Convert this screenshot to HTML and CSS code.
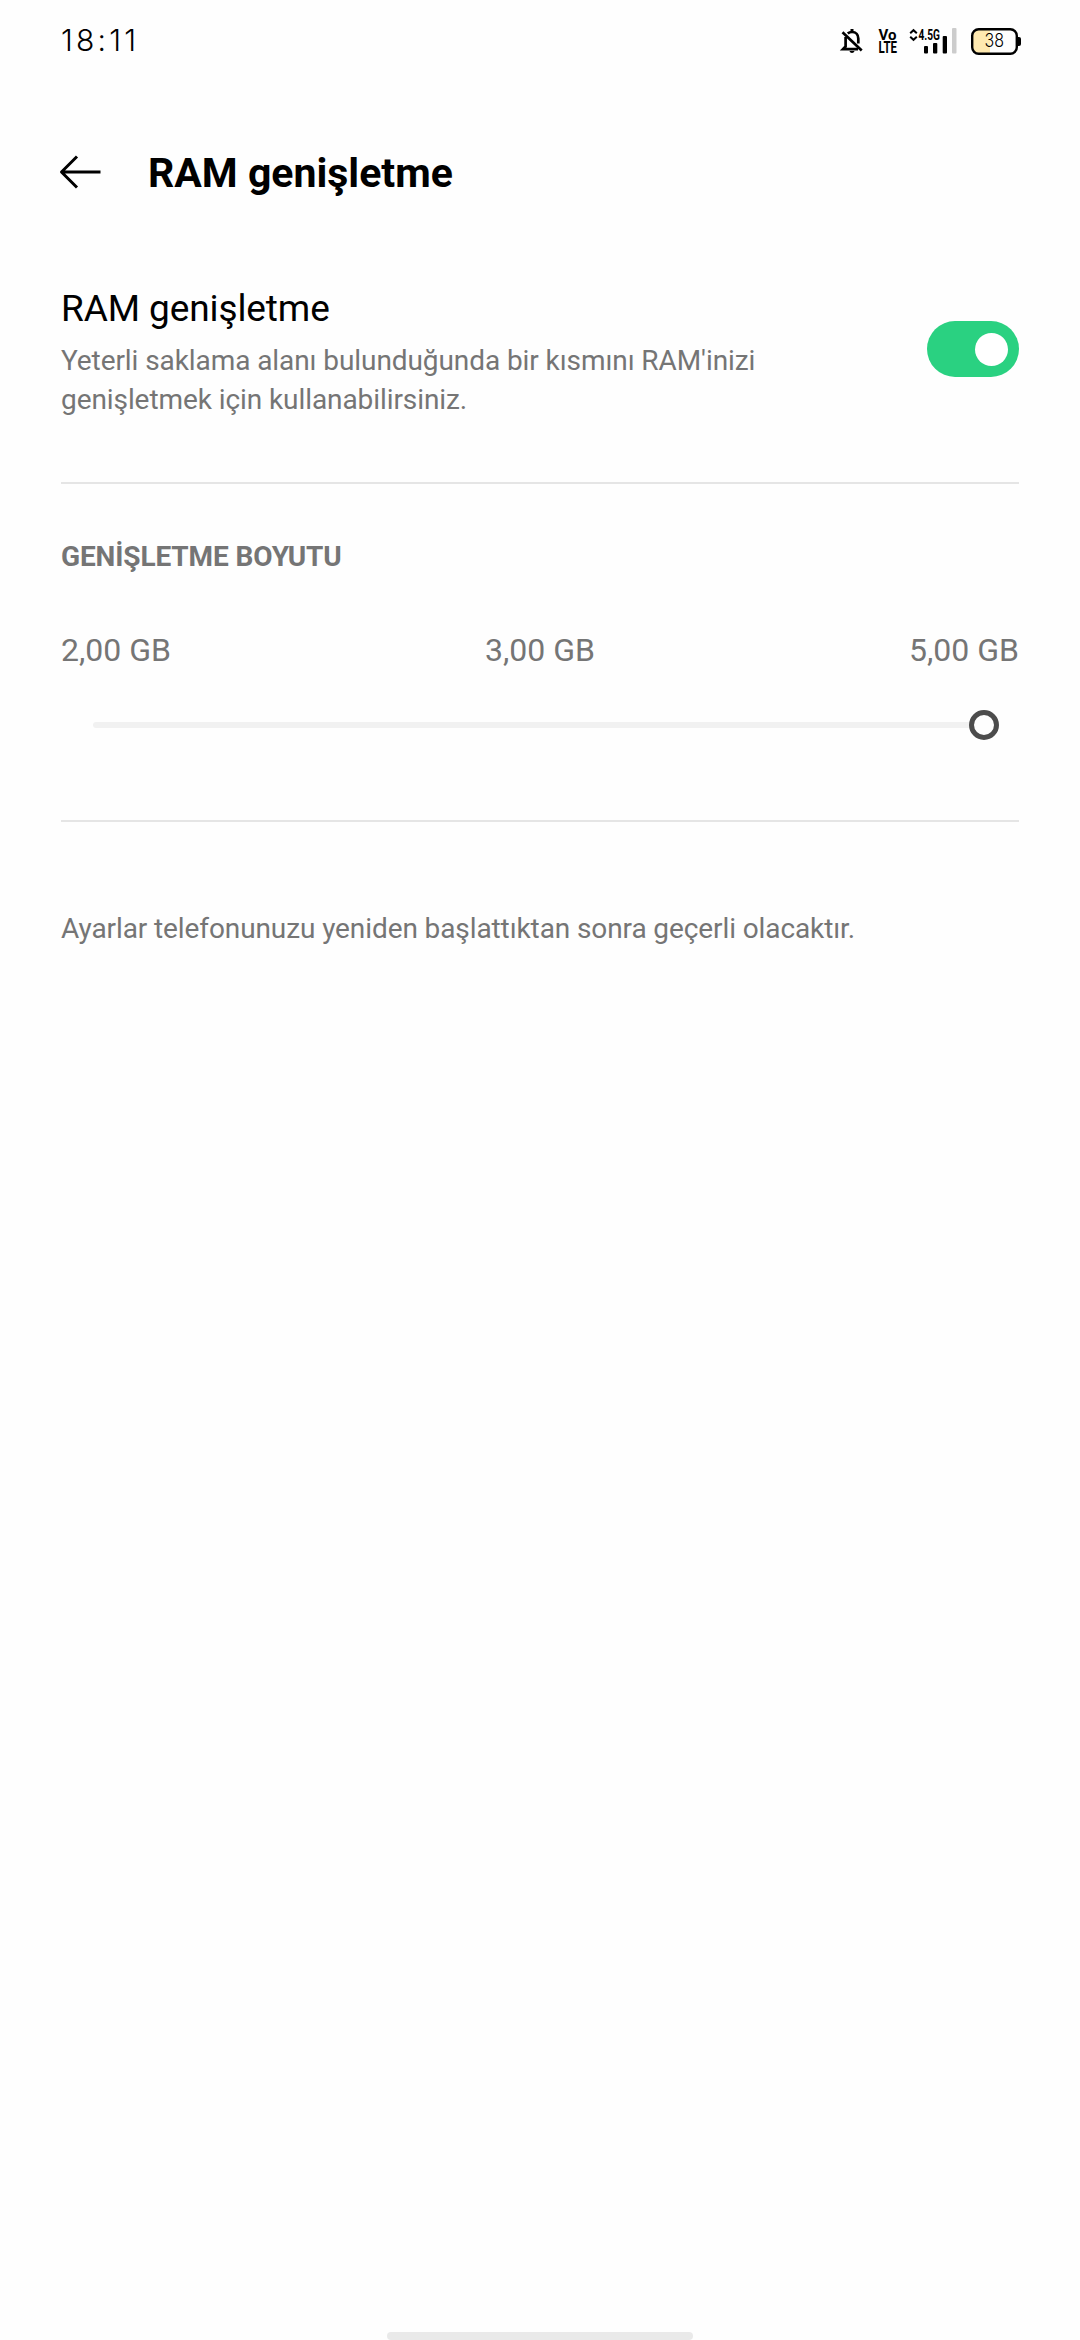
FILE: index.html
```
<!DOCTYPE html>
<html lang="tr">
<head>
  <meta charset="UTF-8">
  <meta name="viewport" content="width=device-width, initial-scale=1.0">
  <title>RAM genişletme</title>
  <link rel="stylesheet" href="styles.css">
</head>
<body>

  <!-- Status bar -->
  <div class="status-bar">
    <span class="clock">18:11</span>
    <div class="status-icons">
      <svg class="icon-bell" width="22" height="26" viewBox="0 0 22 26" fill="none" stroke="#000" stroke-width="2.7">
        <path d="M4.600 9V18.500L2 21.200H17"/>
        <path d="M6.800 5.400C8 4.300 9.500 4 11 4C15 4 17.300 7 17.300 10.500V15.500"/>
        <path d="M1.500 4.300L20.700 22.500"/>
        <path d="M11 1V4" stroke-width="3"/>
        <path d="M8.500 23H13.500C13 25.500 9 25.500 8.500 23Z" fill="#000" stroke="none"/>
      </svg>
      <svg class="icon-volte" width="20" height="26" viewBox="0 0 20 26">
        <text x="0.500" y="11.500" font-size="15.500" textLength="18" lengthAdjust="spacingAndGlyphs">Vo</text>
        <text x="0.500" y="25.300" font-size="16" textLength="18.500" lengthAdjust="spacingAndGlyphs">LTE</text>
      </svg>
      <svg class="icon-signal" width="49" height="26" viewBox="0 0 49 26">
        <path d="M1.200 5.300L4.500 2.200L7.800 5.300M1.200 8.700L4.500 11.800L7.800 8.700" fill="none" stroke="#000" stroke-width="2"/>
        <text x="9.500" y="12" font-size="15.500" textLength="21.500" lengthAdjust="spacingAndGlyphs">4.5G</text>
        <rect x="15" y="18" width="4" height="7.500" rx="1"/>
        <rect x="24" y="15" width="4.300" height="10.500" rx="1"/>
        <rect x="33.700" y="8" width="4.300" height="17.500" rx="1"/>
        <rect x="43" y="0" width="4.500" height="25.500" rx="1" fill="#ccc"/>
      </svg>
      <svg class="icon-battery" width="50" height="27" viewBox="0 0 50 27">
        <path d="M8 2H19V25H8Q2 25 2 19V8Q2 2 8 2Z" fill="#ffe9b0"/>
        <rect x="1.200" y="1.200" width="44.600" height="24.600" rx="6.500" fill="none" stroke="#000" stroke-width="2.400"/>
        <path d="M47 9H48Q50 9 50 11V16Q50 18 48 18H47Z"/>
        <text class="battery-level" x="13.500" y="19" font-size="18" textLength="19.500" lengthAdjust="spacingAndGlyphs">38</text>
      </svg>
    </div>
  </div>

  <!-- Header -->
  <header class="header">
    <svg class="back" width="42" height="34" viewBox="0 0 42 34" fill="none" stroke="#000" stroke-width="3">
      <path d="M41.500 17H2.500M18 1.500L2.500 17L18 32.500" stroke-linejoin="round"/>
    </svg>
    <h1 class="header-title">RAM genişletme</h1>
  </header>

  <main class="content">
    <section class="setting">
      <div class="setting-text">
        <h2 class="setting-title">RAM genişletme</h2>
        <p class="setting-desc">Yeterli saklama alanı bulunduğunda bir kısmını RAM'inizi genişletmek için kullanabilirsiniz.</p>
      </div>
      <div class="toggle"><div class="toggle-knob"></div></div>
    </section>

    <section class="size">
      <h3 class="size-title">GENİŞLETME BOYUTU</h3>
      <div class="size-labels">
        <span>2,00 GB</span>
        <span>3,00 GB</span>
        <span>5,00 GB</span>
      </div>
      <div class="slider">
        <div class="slider-track"></div>
        <div class="slider-thumb"></div>
      </div>
    </section>

    <p class="note">Ayarlar telefonunuzu yeniden başlattıktan sonra geçerli olacaktır.</p>
  </main>

  <div class="nav-handle"></div>

</body>
</html>
```
FILE: styles.css
```
* {
  margin: 0;
  padding: 0;
  box-sizing: border-box;
}

body {
  display: flex;
  flex-direction: column;
  height: 2340px;
  font-family: Roboto, sans-serif;
  background-color: #fefefe;
  color: #000;
  overflow: hidden;
}

/* Status bar */
.status-bar {
  display: flex;
  justify-content: space-between;
  height: 80px;
  padding: 0 59px 0 61px;
}

.clock {
  font-family: Inter, sans-serif;
  font-size: 30px;
  font-weight: 300;
  line-height: 81px;
  letter-spacing: 3.2px;
}

.status-icons {
  display: flex;
  align-items: flex-start;
  padding-top: 28px;
}

.status-icons svg {
  overflow: visible;
}

.status-icons text {
  font-family: Roboto, sans-serif;
  font-weight: 700;
}

.status-icons .battery-level {
  font-family: Inter, sans-serif;
  font-weight: 300;
}

.icon-volte {
  margin-left: 15px;
}

.icon-signal {
  margin-left: 11px;
}

.icon-battery {
  margin-left: 13px;
}

/* Header */
.header {
  display: flex;
  align-items: center;
  height: 184px;
  padding: 0 59px 0 59px;
}

.header-title {
  margin-left: 47px;
  padding-top: 2px;
  font-size: 41px;
  font-weight: 700;
}

/* Settings */
.content {
  flex: 1;
  padding: 0 61px;
}

.setting {
  display: flex;
  justify-content: space-between;
  height: 220px;
  padding-top: 23px;
  border-bottom: 2px solid #e5e5e5;
}

.setting-text {
  width: 740px;
}

.setting-title {
  font-size: 37px;
  font-weight: 400;
  line-height: 44px;
  letter-spacing: -0.1px;
}

.setting-desc {
  margin-top: 10px;
  font-size: 28px;
  line-height: 39px;
  letter-spacing: -0.08px;
  color: #757575;
}

.toggle {
  display: flex;
  justify-content: flex-end;
  align-items: center;
  width: 92px;
  height: 56px;
  margin-top: 34px;
  padding-right: 11px;
  border-radius: 28px;
  background-color: #2ad181;
}

.toggle-knob {
  width: 33px;
  height: 33px;
  border-radius: 50%;
  background-color: #fff;
}

/* Size slider */
.size {
  height: 338px;
  padding-top: 57px;
  border-bottom: 2px solid #e5e5e5;
}

.size-title {
  font-size: 28px;
  font-weight: 700;
  line-height: 32px;
  letter-spacing: -0.12px;
  color: #757575;
}

.size-labels {
  display: flex;
  justify-content: space-between;
  margin-top: 57px;
  font-size: 32px;
  line-height: 40px;
  color: #757575;
}

.slider {
  display: flex;
  align-items: center;
  height: 30px;
  margin-top: 40px;
  padding: 0 20px 0 32px;
}

.slider-track {
  flex: 1;
  height: 6px;
  border-radius: 3px 0 0 3px;
  background-color: #f1f1f1;
}

.slider-thumb {
  width: 30px;
  height: 30px;
  border: 5px solid #4c4c4c;
  border-radius: 50%;
}

.note {
  margin-top: 90px;
  font-size: 28px;
  line-height: 34px;
  letter-spacing: -0.1px;
  color: #757575;
}

/* Gesture handle */
.nav-handle {
  width: 306px;
  height: 8px;
  margin: 0 auto;
  border-radius: 4px;
  background-color: #e9e9e9;
}
```
